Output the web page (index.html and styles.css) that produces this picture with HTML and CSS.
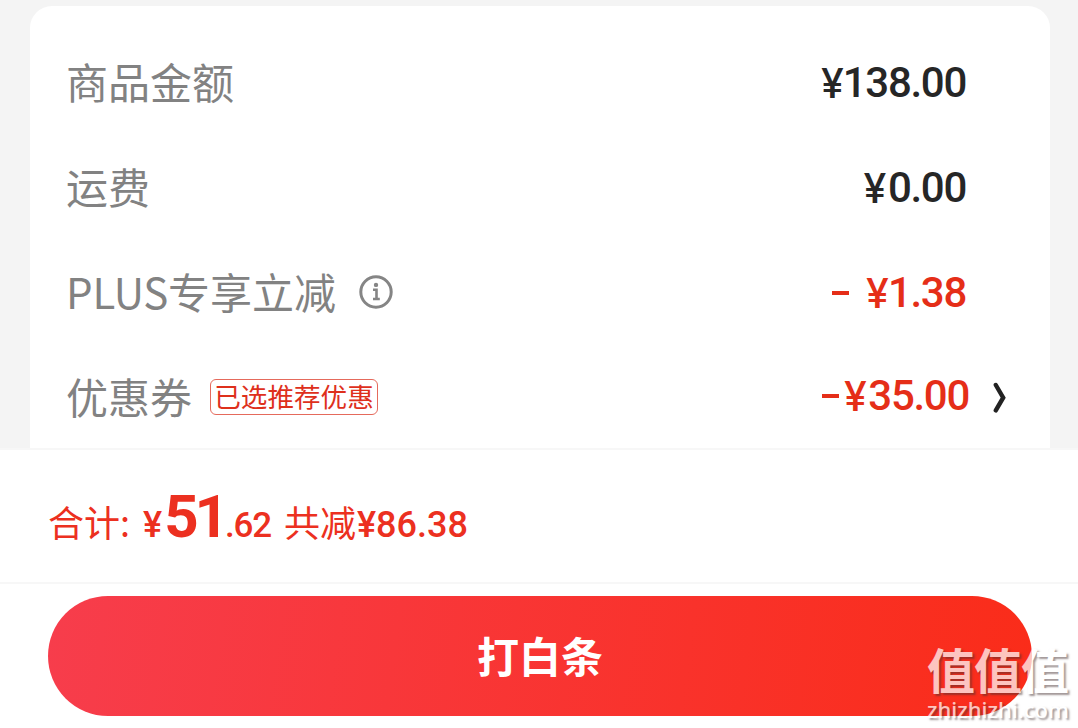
FILE: index.html
```
<!DOCTYPE html>
<html lang="zh-CN">
<head>
    <meta charset="UTF-8">
    <title>确认订单</title>
    <link rel="stylesheet" href="styles.css">
</head>

<body>
    <div id="main">
        <div id="top">
            <div class="card">
                <div class="row">
                    <span class="label">商品金额</span>
                    <span class="price"><span class="sign">¥</span>138.00</span>
                </div>
                <div class="row">
                    <span class="label">运费</span>
                    <span class="price"><span class="sign wide">¥</span>0.00</span>
                </div>
                <div class="row">
                    <span class="label"><span class="latin">PLUS</span>专享立减</span>
                    <svg class="info" width="36" height="36" viewBox="0 0 36 36">
                        <circle cx="18" cy="18" r="15.2" fill="none" stroke="#858585" stroke-width="3"/>
                        <circle cx="18" cy="10.9" r="2.2" fill="#858585"/>
                        <path d="M15 15.7H18.5V24.5M15 25H21.8" fill="none" stroke="#858585" stroke-width="2.6"/>
                    </svg>
                    <span class="price red"><i class="minus"></i><span class="space"></span><span class="sign">¥</span>1.38</span>
                </div>
                <div class="row">
                    <span class="label">优惠券</span>
                    <span class="tag">已选推荐优惠</span>
                    <span class="price red coupon"><i class="minus"></i><span class="sign wide">¥</span>35.00</span>
                    <svg class="arrow" width="14" height="32" viewBox="0 0 14 32">
                        <path d="M2.8 3L10.2 15.7L2.8 28.4" fill="none" stroke="#222" stroke-width="4.4" stroke-linecap="round"/>
                    </svg>
                </div>
            </div>
        </div>
        <div id="total">
            <span class="heji">合计:</span>
            <span class="yen">¥</span>
            <span class="big">51</span>
            <span class="cents">.62</span>
            <span class="gongjian">共减</span>
            <span class="saved">¥86.38</span>
        </div>
        <div id="bottom">
            <button>打白条</button>
        </div>
        <div class="watermark">
            <div class="zhi">值值值</div>
            <div class="site">zhizhizhi.com</div>
        </div>
    </div>
</body>
</html>
```
FILE: styles.css
```
body{
    margin: 0;
    background: #fff;
    font-family: "Noto Sans CJK SC", sans-serif;
}
#main{
    position: relative;
    width: 1078px;
    height: 728px;
    overflow: hidden;
}
#top{
    box-sizing: border-box;
    height: 448px;
    padding: 6px 28px 0 30px;
    background: #f4f4f4;
}
.card{
    box-sizing: border-box;
    height: 442px;
    padding: 24px 43px 0 36px;
    background: #fff;
    border-radius: 22px 22px 0 0;
}
.row{
    display: flex;
    align-items: center;
    height: 105px;
}
.label{
    margin-bottom: 3px;
    font-size: 42px;
    line-height: 60px;
    color: #828282;
}
.latin{
    letter-spacing: -0.2px;
}
.info{
    margin-left: 22px;
    margin-bottom: 1px;
}
.price{
    display: flex;
    align-items: center;
    margin-left: auto;
    margin-right: 41px;
    font-family: Roboto, sans-serif;
    font-weight: 500;
    font-size: 42px;
    line-height: 60px;
    letter-spacing: -1.3px;
    color: #262626;
}
.sign{
    font-family: Inter, sans-serif;
    font-size: 41px;
    font-weight: 500;
    letter-spacing: -1px;
}
.wide{
    letter-spacing: 1.5px;
}
.red{
    color: #e52e18;
}
.minus{
    width: 17px;
    height: 4px;
    background: #e52e18;
}
.space{
    width: 17px;
}
.tag{
    box-sizing: border-box;
    width: 168px;
    height: 36px;
    margin-left: 18px;
    margin-bottom: 2px;
    border: 1px solid #e56a5c;
    border-radius: 6px;
    font-size: 26.6px;
    line-height: 32px;
    text-align: center;
    white-space: nowrap;
    color: #de301c;
}
.coupon{
    margin-right: 24px;
    margin-bottom: 3px;
    .minus{
        margin-right: 5px;
    }
}
#total{
    box-sizing: border-box;
    display: flex;
    align-items: baseline;
    height: 136px;
    padding: 37px 48px 0;
    border-top: 2px solid #f7f7f7;
    border-bottom: 2px solid #f7f7f7;
    font-size: 36px;
    line-height: 60px;
    color: #ec3020;
}
.yen, .big, .cents, .saved{
    font-family: Roboto, sans-serif;
    font-weight: 500;
}
.yen{
    margin-left: 13px;
}
.big{
    margin-left: 2px;
    font-size: 60px;
    font-weight: 700;
    letter-spacing: -4px;
}
.cents{
    font-size: 35px;
    letter-spacing: -1.2px;
}
.gongjian{
    margin-left: 13px;
}
.saved{
    margin-left: 1px;
}
#bottom{
    padding: 12px 46px 0 48px;
    button{
        display: block;
        width: 984px;
        height: 120px;
        padding: 0 0 3px;
        border: none;
        border-radius: 60px;
        background: linear-gradient(98deg, #f73d4c, #fa2c19);
        font-family: "Noto Sans CJK SC", sans-serif;
        font-size: 42px;
        font-weight: 700;
        color: #fff;
    }
}
/* site mark laid over the corner of the button */
.watermark{
    position: absolute;
    left: 927px;
    top: 642px;
    color: #fff;
    text-shadow: 2px 2px 2px rgba(70, 50, 50, 0.7);
    opacity: 0.72;
    .zhi{
        font-size: 48px;
        font-weight: 700;
        line-height: 52px;
        letter-spacing: -1px;
    }
    .site{
        font-family: "Noto Sans", sans-serif;
        font-size: 22px;
        font-weight: 500;
        line-height: 30px;
    }
}
```
